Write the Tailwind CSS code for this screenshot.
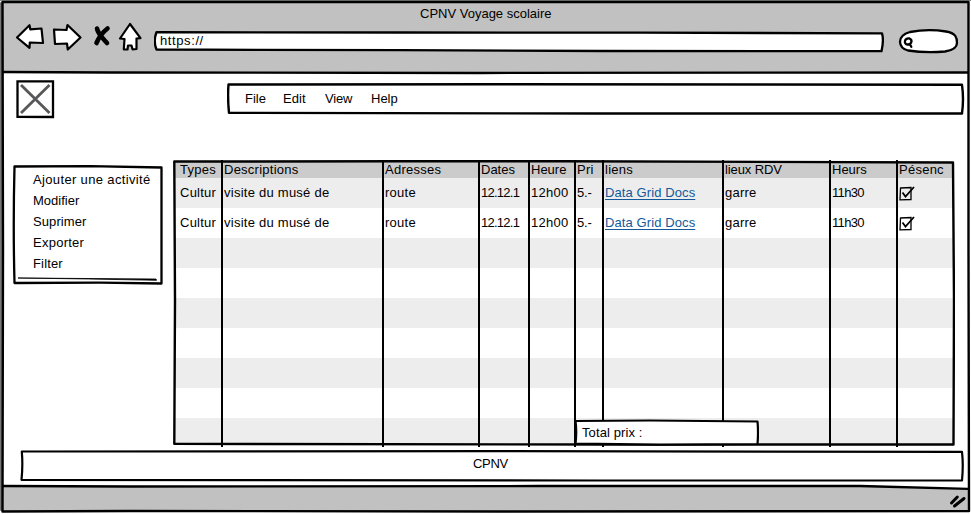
<!DOCTYPE html>
<html lang="fr">
<head>
<meta charset="utf-8">
<title>CPNV Voyage scolaire</title>
<script src="https://cdn.jsdelivr.net/npm/@tailwindcss/browser@4"></script>
</head>
<body class="bg-white">
<div class="relative flex flex-col w-[971px] h-[514px] overflow-hidden text-[13px] text-black whitespace-nowrap font-['Liberation_Sans',sans-serif]">
  <!-- window frame -->
  <svg class="absolute inset-0 pointer-events-none" width="971" height="514" fill="none" stroke="#000" stroke-linecap="round" stroke-linejoin="round">
    <path d="M0 .5H971" stroke="#858a84" stroke-width="1"/>
    <path d="M3 2H969V72.5H3Z" fill="#c1c1c1" stroke="none"/>
    <path d="M3 486.5L480 486L860 486L968 488.5V511H3Z" fill="#c1c1c1" stroke="none"/>
    <path d="M1 3V510" stroke="#777" stroke-width="2"/>
    <path d="M2.5 2L968.5 2L968.5 250L969 511L500 511.500L130 511L2.5 511.500L3 250Z" stroke-width="2.400"/>
    <path d="M3 72L110 72.500L480 73L968 72.500M3 486L130 486.500L540 486L860 486L968 488.800" stroke-width="2.300"/>
    <path d="M951.500 503L957.300 497M954.500 506L964 498.500" stroke-width="3"/>
  </svg>

  <header class="relative h-[73px] shrink-0 flex flex-col">
    <div class="h-[26px] pl-[420px] leading-[28px]">CPNV Voyage scolaire</div>
    <div class="flex items-center h-[32px] pl-[15px]">
      <svg class="shrink-0 overflow-visible" width="128" height="32" viewBox="15 26 128 32" fill="#fff" stroke="#000" stroke-width="2.200" stroke-linejoin="round" stroke-linecap="round">
        <path d="M17 37.500L29.500 25.200L30.300 29.300L41.500 28.500L43 43L29.800 42.500L29.500 47.800Z"/>
        <path d="M54 29.500L66.500 30L67.500 25L80.500 37.500L67.800 49.500L67 43.500L55 44Z"/>
        <path d="M97 28.500C98 34 103 38.500 107 43M107.500 28.500C103 32 99 37 96.500 43" fill="none" stroke-width="4.600"/>
        <path d="M130 24L120 38.500L124.500 39L123.800 49.300L127.500 49.500L128 45.500L131.500 45.500L132.500 49.300L136.500 49L136.500 38.500L140.500 38.200Z"/>
      </svg>
      <div class="relative ml-[11px] w-[730px] h-[22px] pl-[6px] leading-[20px] tracking-[0.6px]">
        <svg class="absolute inset-0" width="730" height="22" viewBox="154 31 730 22" fill="#fff" stroke="#000" stroke-width="2.300" stroke-linejoin="round">
          <path d="M156.500 32.200L400 32.500L640 32.700L882 33.300Q884 40 881.500 51.200L600 51L400 50.200L156.500 49.500Q153 41 156.500 32.200Z"/>
        </svg>
        <span class="relative">https://</span>
      </div>
      <svg class="shrink-0 ml-[14px]" width="62" height="28" viewBox="898 28 62 28" fill="#fff" stroke="#000" stroke-width="2.300" stroke-linecap="round">
        <path d="M910 32Q928 28.500 946 31.500C956 33 957 38 957 43C957 48 951 50.500 945 51.500Q925 53 908 50.500C898 48 896 36 910 32Z"/>
        <path d="M909.500 38.500C913 40 911.500 44.800 907.500 44.500C903.500 44 904 38 909.500 38.500ZM910 44.500L911.300 46.800" fill="none"/>
      </svg>
    </div>
  </header>

  <div class="relative h-[87px] shrink-0 flex pl-[15px] pt-[7px]">
    <svg class="shrink-0" width="40" height="40" viewBox="15 80 40 40" fill="#fff" stroke="#000" stroke-width="2.300">
      <path d="M17.500 81.300L53 81.300L53 117L17.500 116.800Z"/>
      <path d="M21 85L49.500 113M49.500 85L21 113" stroke="#58585a" stroke-width="2.800"/>
    </svg>
    <nav class="relative ml-[172px] w-[738px] h-[34px] flex pl-[18px] pt-[2px] leading-[34px]">
      <svg class="absolute inset-0" width="738" height="36" viewBox="227 80 738 36" fill="#fff" stroke="#000" stroke-width="2.400" stroke-linejoin="round">
        <path d="M228.500 84.500L500 84.200L962 84.800Q964 99 962 113.500L600 113.500L229 112.800Q227.500 98 228.500 84.500Z"/>
      </svg>
      <span class="relative w-[38px]">File</span>
      <span class="relative w-[42px] tracking-[0.1px]">Edit</span>
      <span class="relative w-[46px] -tracking-[0.2px]">View</span>
      <span class="relative">Help</span>
    </nav>
  </div>

  <main class="relative h-[288px] shrink-0 flex">
    <aside class="relative ml-[12px] mt-[5px] w-[152px] h-[121px]">
      <svg class="absolute inset-0" width="152" height="121" viewBox="12 165 152 121" fill="#fff" stroke="#000" stroke-width="2.300" stroke-linejoin="round">
        <path d="M14.500 166.500L90 166.200L161.500 167.500L161.500 283.500L100 282.700L14.500 283Q13 225 14.500 166.500Z"/>
        <path d="M18 278L156 279L156.500 280.300Q90 278.800 18 278Z" fill="#000" stroke-width=".8"/>
      </svg>
      <ul class="relative pl-[21px] pt-[4px] leading-[21px]">
        <li class="tracking-[0.35px]">Ajouter une activité</li>
        <li>Modifier</li>
        <li class="tracking-[0.1px]">Suprimer</li>
        <li class="tracking-[0.25px]">Exporter</li>
        <li class="tracking-[0.15px]">Filter</li>
      </ul>
    </aside>

    <section class="relative ml-[9px] w-[782px] h-[287px]">
      <!-- header band and zebra rows -->
      <div class="absolute inset-0 pt-[2px] px-[2px]">
        <div class="h-[16px] bg-[#cbcbcb]"></div>
        <div class="h-[30px] bg-[#ededed]"></div>
        <div class="h-[30px]"></div>
        <div class="h-[30px] bg-[#ededed]"></div>
        <div class="h-[30px]"></div>
        <div class="h-[30px] bg-[#ededed]"></div>
        <div class="h-[30px]"></div>
        <div class="h-[30px] bg-[#ededed]"></div>
        <div class="h-[30px]"></div>
        <div class="h-[26px] bg-[#ededed]"></div>
      </div>
      <!-- column rules -->
      <div class="absolute inset-0 grid grid-cols-[50px_161px_96px_50px_46px_28px_120px_107px_67px_1fr] divide-x-2 divide-black">
        <i></i><i></i><i></i><i></i><i></i><i></i><i></i><i></i><i></i><i></i>
      </div>
      <svg class="absolute inset-0" width="782" height="287" viewBox="173 160 782 287" fill="none" stroke="#000" stroke-width="2.400" stroke-linejoin="round">
        <path d="M174.300 161.500L400 161.300L560 161.300L953 162.500L954 300L953.500 444.500L600 444.500L174.300 443.800L175 300Z"/>
      </svg>
      <div class="relative grid grid-cols-[51px_161px_96px_50px_46px_28px_120px_107px_67px_1fr] pt-[2px] leading-[16px] tracking-[0.25px]">
        <span class="pl-[7px]">Types</span><span>Descriptions</span><span>Adresses</span><span class="tracking-normal">Dates</span><span class="tracking-normal">Heure</span><span>Pri</span><span>liens</span><span class="-tracking-[0.1px]">lieux RDV</span><span class="tracking-normal">Heurs</span><span>Pésenc</span>
      </div>
      <div class="relative grid grid-cols-[51px_161px_96px_50px_46px_28px_120px_107px_67px_1fr] h-[30px] leading-[30px] tracking-[0.25px]">
        <span class="pl-[7px]">Cultur</span><span>visite du musé de</span><span>route</span><span class="-tracking-[0.75px]">12.12.1</span><span>12h00</span><span class="-tracking-[0.2px]">5.-</span><a class="text-[#12599b] underline underline-offset-2 tracking-[0.1px]">Data Grid Docs</a><span>garre</span><span class="-tracking-[0.65px]">11h30</span>
        <svg class="mt-[8px]" width="17" height="17" fill="none" stroke="#000" stroke-width="1.300"><path d="M1.500 2L12 1.500L12 13.500L1 13.800Z"/><path d="M3.500 6.500L6.500 10.500L15 1" stroke-width="1.800"/></svg>
      </div>
      <div class="relative grid grid-cols-[51px_161px_96px_50px_46px_28px_120px_107px_67px_1fr] h-[30px] leading-[30px] tracking-[0.25px]">
        <span class="pl-[7px]">Cultur</span><span>visite du musé de</span><span>route</span><span class="-tracking-[0.75px]">12.12.1</span><span>12h00</span><span class="-tracking-[0.2px]">5.-</span><a class="text-[#12599b] underline underline-offset-2 tracking-[0.1px]">Data Grid Docs</a><span>garre</span><span class="-tracking-[0.65px]">11h30</span>
        <svg class="mt-[8px]" width="17" height="17" fill="none" stroke="#000" stroke-width="1.300"><path d="M1.500 2L12 1.500L12 13.500L1 13.800Z"/><path d="M3.500 6.500L6.500 10.500L15 1" stroke-width="1.800"/></svg>
      </div>
      <!-- total box laid over the last row -->
      <div class="absolute left-[401px] top-[259px] w-[185px] h-[28px] pl-[8px] leading-[28px]">
        <svg class="absolute inset-0" width="185" height="28" viewBox="574 419 185 28" stroke="#000" stroke-width="2.200" stroke-linejoin="round" fill="#fff"><path d="M575.500 421L650 420.500L757.500 421.500Q758.500 432 757.500 444L660 444.700L575.500 443.500Q577 432 575.500 421Z"/></svg>
        <span class="relative tracking-[0.1px]">Total prix :</span>
      </div>
    </section>
  </main>

  <footer class="relative ml-[20px] mt-[2px] w-[944px] h-[32px] pl-[453px] leading-[28px]">
    <svg class="absolute inset-0" width="944" height="32" viewBox="20 450 944 32" stroke="#000" stroke-width="2.200" stroke-linejoin="round" fill="#fff"><path d="M21.800 451.500L500 451.200L962 451.800Q963.500 465 962 480.500L600 480.500L21.500 479.800Q23 465 21.800 451.500Z"/></svg>
    <span class="relative -tracking-[0.3px]">CPNV</span>
  </footer>
</div>
</body>
</html>
